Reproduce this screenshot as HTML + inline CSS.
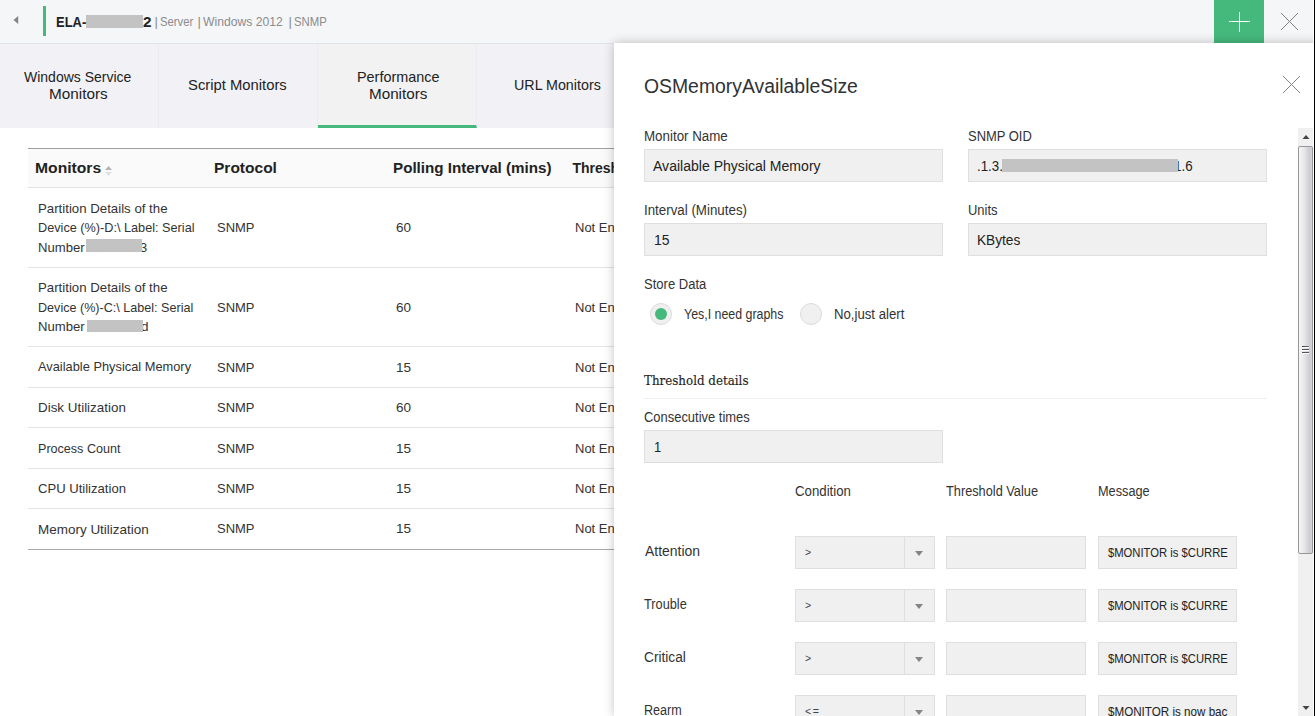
<!DOCTYPE html>
<html><head><meta charset="utf-8"><title>Performance Monitors</title>
<style>
*{box-sizing:border-box;margin:0;padding:0}
html,body{width:1315px;height:716px;overflow:hidden;background:#fff}
body{font-family:"Liberation Sans",sans-serif;color:#333;position:relative;font-size:14px}
.abs{position:absolute}
.t{position:absolute;white-space:nowrap;line-height:20px;transform-origin:0 0}
#hdr{left:0;top:0;width:1312.5px;height:43px;background:#f5f6f8}
#tabs{left:0;top:44px;width:1312.5px;height:84px;background:#f2f2f6}
.tab{position:absolute;top:0;height:84px;width:159px;border-right:1px solid #ebebf0}
.tab.on{background:#f2f2f2;border-bottom:3px solid #45b97c}
.hr{position:absolute;left:28px;height:1px;width:600px;background:#e4e4e4}
#panel{left:614px;top:43px;width:730px;height:673px;background:#fff;box-shadow:0 0 10px rgba(0,0,0,.24)}
.inp{position:absolute;height:33px;background:#f0f0f0;border:1px solid #dfdfdf}
.sel .arr{position:absolute;right:0;top:0;width:30px;height:31px;border-left:1px solid #dfdfdf}
.sel .arr:after{content:"";position:absolute;left:10px;top:13.5px;border:4px solid transparent;border-top:5px solid #858585;border-bottom:0}
.op{position:absolute;left:9px;top:4.5px;font-size:11.5px;line-height:20px;color:#444;transform:scaleX(.92);transform-origin:0 0}
.op.le{letter-spacing:1.6px}
.msg{position:absolute;left:8.5px;top:5.5px;width:120.5px;overflow:hidden;white-space:nowrap;font-size:13px;line-height:20px;color:#222}
.msg span{display:inline-block;transform-origin:0 0}
.rad{position:absolute;width:22px;height:22px;border-radius:50%;background:#f0f0f0;border:1px solid #dcdcdc}
.red{position:absolute;background:#c3c3c3}
</style></head><body>
<div id="hdr" class="abs"></div>
<div class="abs" style="left:0;top:43px;width:1312.5px;height:1px;background:#e2e3e6"></div>
<svg class="abs" style="left:12px;top:14px" width="10" height="12"><path d="M6.2 2 L1.5 6 L6.2 10 Z" fill="#83838c"/></svg>
<div class="abs" style="left:43px;top:6px;width:3px;height:30px;background:#45b97c"></div>
<div class="red" style="left:86.2px;top:15px;width:56.6px;height:12.7px"></div>
<div class="abs" style="left:1214px;top:0;width:50px;height:43px;background:#45b97c"></div>
<div class="abs" style="left:1239px;top:12px;width:1px;height:20px;background:#fff"></div><div class="abs" style="left:1229px;top:21px;width:21px;height:1px;background:#fff"></div>
<svg class="abs" style="left:1280px;top:12px" width="20" height="20"><path d="M1 1L18 18M18 1L1 18" stroke="#828282" stroke-width="1" fill="none"/></svg>
<div id="tabs" class="abs">
 <div class="tab" style="left:0"></div>
 <div class="tab" style="left:159px"></div>
 <div class="tab on" style="left:318px"></div>
 <div class="tab" style="left:477px"></div>
</div>
<div class="abs" style="left:28px;top:148px;width:600px;height:40px;background:#fafafa;border-top:1px solid #a0a0a0;border-bottom:1px solid #e2e2e2"></div>
<svg class="abs" style="left:104px;top:165px" width="9" height="12"><path d="M1 5L4.5 1L8 5Z" fill="#b5b5b5"/><path d="M1 7L4.5 11L8 7Z" fill="#e0e0e0"/></svg>

<div class="hr" style="top:267px"></div>
<div class="hr" style="top:346px"></div>
<div class="hr" style="top:387px"></div>
<div class="hr" style="top:427px"></div>
<div class="hr" style="top:468px"></div>
<div class="hr" style="top:508px"></div>
<div class="hr" style="top:549px;background:#a8a8a8"></div>
<div class="t" id="t0" style="left:56.13px;top:11.66px;font-size:15.4px;color:#222;font-weight:bold;transform:scaleX(0.8409);">ELA-</div>
<div class="t" id="t1" style="left:142.65px;top:11.66px;font-size:15.4px;color:#222;font-weight:bold;transform:scaleX(0.9933);">2</div>
<div class="t" id="t2" style="left:154.50px;top:12.00px;font-size:13px;color:#8c8c8c;">|</div>
<div class="t" id="t3" style="left:159.85px;top:12.00px;font-size:13px;color:#8c8c8c;transform:scaleX(0.8698);">Server</div>
<div class="t" id="t4" style="left:197.50px;top:12.00px;font-size:13px;color:#8c8c8c;">|</div>
<div class="t" id="t5" style="left:203.00px;top:12.00px;font-size:13px;color:#8c8c8c;transform:scaleX(0.9369);">Windows 2012</div>
<div class="t" id="t6" style="left:288.50px;top:12.00px;font-size:13px;color:#8c8c8c;">|</div>
<div class="t" id="t7" style="left:293.85px;top:12.00px;font-size:13px;color:#8c8c8c;transform:scaleX(0.8722);">SNMP</div>
<div class="t" id="t8" style="left:24.25px;top:66.98px;font-size:14.5px;color:#222;transform:scaleX(0.9652);">Windows Service</div>
<div class="t" id="t9" style="left:48.84px;top:84.23px;font-size:14.5px;color:#222;transform:scaleX(1.0546);">Monitors</div>
<div class="t" id="t10" style="left:188.48px;top:74.98px;font-size:14.5px;color:#222;transform:scaleX(1.0215);">Script Monitors</div>
<div class="t" id="t11" style="left:357.16px;top:66.98px;font-size:14.5px;color:#222;transform:scaleX(0.9932);">Performance</div>
<div class="t" id="t12" style="left:369.10px;top:84.23px;font-size:14.5px;color:#222;transform:scaleX(1.0500);">Monitors</div>
<div class="t" id="t13" style="left:514.17px;top:74.98px;font-size:14.5px;color:#222;transform:scaleX(0.9850);">URL Monitors</div>
<div class="t" id="t14" style="left:35.24px;top:158.15px;font-size:14px;color:#222;font-weight:bold;transform:scaleX(1.1200);">Monitors</div>
<div class="t" id="t15" style="left:214.31px;top:158.15px;font-size:14px;color:#222;font-weight:bold;transform:scaleX(1.1082);">Protocol</div>
<div class="t" id="t16" style="left:393.33px;top:158.15px;font-size:14px;color:#222;font-weight:bold;transform:scaleX(1.0843);">Polling Interval (mins)</div>
<div class="t" id="t17" style="left:572.50px;top:158.15px;font-size:14px;color:#222;font-weight:bold;">Threshold</div>
<div class="t" id="t18" style="left:38.48px;top:198.50px;font-size:13px;color:#333;transform:scaleX(1.0183);">Partition Details of the</div>
<div class="t" id="t19" style="left:37.93px;top:218.00px;font-size:13px;color:#333;transform:scaleX(0.9760);">Device (%)-D:\ Label: Serial</div>
<div class="t" id="t20" style="left:38.14px;top:237.75px;font-size:13px;color:#333;transform:scaleX(1.0089);">Number</div>
<div class="t" id="t21" style="left:139.65px;top:237.75px;font-size:13px;color:#333;transform:scaleX(0.9917);">3</div>
<div class="t" id="t22" style="left:38.48px;top:277.75px;font-size:13px;color:#333;transform:scaleX(1.0183);">Partition Details of the</div>
<div class="t" id="t23" style="left:37.93px;top:297.50px;font-size:13px;color:#333;transform:scaleX(0.9681);">Device (%)-C:\ Label: Serial</div>
<div class="t" id="t24" style="left:38.14px;top:317.00px;font-size:13px;color:#333;transform:scaleX(1.0089);">Number</div>
<div class="t" id="t25" style="left:141.11px;top:317.00px;font-size:13px;color:#333;transform:scaleX(1.0400);">d</div>
<div class="t" id="t26" style="left:216.75px;top:218.00px;font-size:13px;color:#333;transform:scaleX(0.9972);">SNMP</div>
<div class="t" id="t27" style="left:396.37px;top:218.00px;font-size:13px;color:#333;transform:scaleX(1.0400);">60</div>
<div class="t" id="t28" style="left:575.00px;top:218.00px;font-size:13px;color:#333;">Not Enabled</div>
<div class="t" id="t29" style="left:216.75px;top:297.50px;font-size:13px;color:#333;transform:scaleX(0.9972);">SNMP</div>
<div class="t" id="t30" style="left:396.37px;top:297.50px;font-size:13px;color:#333;transform:scaleX(1.0400);">60</div>
<div class="t" id="t31" style="left:575.00px;top:297.50px;font-size:13px;color:#333;">Not Enabled</div>
<div class="t" id="t32" style="left:216.75px;top:357.50px;font-size:13px;color:#333;transform:scaleX(0.9972);">SNMP</div>
<div class="t" id="t33" style="left:395.80px;top:357.50px;font-size:13px;color:#333;transform:scaleX(1.0400);">15</div>
<div class="t" id="t34" style="left:575.00px;top:357.50px;font-size:13px;color:#333;">Not Enabled</div>
<div class="t" id="t35" style="left:216.75px;top:397.50px;font-size:13px;color:#333;transform:scaleX(0.9972);">SNMP</div>
<div class="t" id="t36" style="left:396.37px;top:397.50px;font-size:13px;color:#333;transform:scaleX(1.0400);">60</div>
<div class="t" id="t37" style="left:575.00px;top:397.50px;font-size:13px;color:#333;">Not Enabled</div>
<div class="t" id="t38" style="left:216.75px;top:438.50px;font-size:13px;color:#333;transform:scaleX(0.9972);">SNMP</div>
<div class="t" id="t39" style="left:395.80px;top:438.50px;font-size:13px;color:#333;transform:scaleX(1.0400);">15</div>
<div class="t" id="t40" style="left:575.00px;top:438.50px;font-size:13px;color:#333;">Not Enabled</div>
<div class="t" id="t41" style="left:216.75px;top:478.50px;font-size:13px;color:#333;transform:scaleX(0.9972);">SNMP</div>
<div class="t" id="t42" style="left:395.80px;top:478.50px;font-size:13px;color:#333;transform:scaleX(1.0400);">15</div>
<div class="t" id="t43" style="left:575.00px;top:478.50px;font-size:13px;color:#333;">Not Enabled</div>
<div class="t" id="t44" style="left:216.75px;top:519.00px;font-size:13px;color:#333;transform:scaleX(0.9972);">SNMP</div>
<div class="t" id="t45" style="left:395.80px;top:519.00px;font-size:13px;color:#333;transform:scaleX(1.0400);">15</div>
<div class="t" id="t46" style="left:575.00px;top:519.00px;font-size:13px;color:#333;">Not Enabled</div>
<div class="t" id="t47" style="left:38.45px;top:357.10px;font-size:13px;color:#333;transform:scaleX(0.9868);">Available Physical Memory</div>
<div class="t" id="t48" style="left:37.91px;top:397.50px;font-size:13px;color:#333;transform:scaleX(1.0306);">Disk Utilization</div>
<div class="t" id="t49" style="left:37.94px;top:438.50px;font-size:13px;color:#333;transform:scaleX(0.9667);">Process Count</div>
<div class="t" id="t50" style="left:37.80px;top:478.50px;font-size:13px;color:#333;transform:scaleX(1.0058);">CPU Utilization</div>
<div class="t" id="t51" style="left:37.91px;top:519.50px;font-size:13px;color:#333;transform:scaleX(1.0362);">Memory Utilization</div>
<div class="red" style="left:86px;top:239px;width:56px;height:13px"></div>
<div class="red" style="left:87px;top:320px;width:56px;height:12px"></div>
<div class="abs" style="left:0;top:0;width:1312.5px;height:716px;overflow:hidden"><div id="panel" class="abs"></div></div>
<svg class="abs" style="left:1282px;top:75px" width="20" height="20"><path d="M1 1L18 18M18 1L1 18" stroke="#828282" stroke-width="1" fill="none"/></svg>
<div class="inp" style="left:644px;top:149px;width:299px"></div>
<div class="inp" style="left:644px;top:223px;width:299px"></div>
<div class="inp" style="left:968px;top:149px;width:299px"></div>
<div class="inp" style="left:968px;top:223px;width:299px"></div>
<div class="inp" style="left:644px;top:430px;width:299px"></div>
<div class="abs" style="left:644px;top:398px;width:623px;height:1px;background:#efefef"></div>
<div class="rad" style="left:650px;top:303px"></div><div class="abs" style="left:655px;top:308px;width:12px;height:12px;border-radius:50%;background:#45b97c"></div>
<div class="rad" style="left:800px;top:303px"></div>
<div class="inp sel" style="left:795px;top:536px;width:140px"><span class="op">&gt;</span><span class="arr"></span></div>
<div class="inp" style="left:946px;top:536px;width:140px"></div>
<div class="inp" style="left:1098px;top:536px;width:139px"><div class="msg"><span style="transform:scaleX(0.865)">$MONITOR is $CURRENTVALUE</span></div></div>
<div class="inp sel" style="left:795px;top:589px;width:140px"><span class="op">&gt;</span><span class="arr"></span></div>
<div class="inp" style="left:946px;top:589px;width:140px"></div>
<div class="inp" style="left:1098px;top:589px;width:139px"><div class="msg"><span style="transform:scaleX(0.865)">$MONITOR is $CURRENTVALUE</span></div></div>
<div class="inp sel" style="left:795px;top:642px;width:140px"><span class="op">&gt;</span><span class="arr"></span></div>
<div class="inp" style="left:946px;top:642px;width:140px"></div>
<div class="inp" style="left:1098px;top:642px;width:139px"><div class="msg"><span style="transform:scaleX(0.865)">$MONITOR is $CURRENTVALUE</span></div></div>
<div class="inp sel" style="left:795px;top:695px;width:140px"><span class="op le">&lt;=</span><span class="arr"></span></div>
<div class="inp" style="left:946px;top:695px;width:140px"></div>
<div class="inp" style="left:1098px;top:695px;width:139px"><div class="msg"><span style="transform:scaleX(0.895)">$MONITOR is now back to normal</span></div></div>
<div class="t" id="t52" style="left:643.51px;top:75.64px;font-size:19.5px;color:#303236;transform:scaleX(0.9934);">OSMemoryAvailableSize</div>
<div class="t" id="t53" style="left:644.20px;top:126.15px;font-size:14px;color:#333;transform:scaleX(0.9530);">Monitor Name</div>
<div class="t" id="t54" style="left:967.81px;top:126.15px;font-size:14px;color:#333;transform:scaleX(0.9244);">SNMP OID</div>
<div class="t" id="t55" style="left:653.45px;top:156.15px;font-size:14px;color:#222;transform:scaleX(1.0033);">Available Physical Memory</div>
<div class="t" id="t56" style="left:976.97px;top:156.15px;font-size:14px;color:#222;transform:scaleX(0.9475);">.1.3.</div>
<div class="t" id="t57" style="left:1173.70px;top:156.15px;font-size:14px;color:#222;transform:scaleX(0.9549);">1.6</div>
<div class="t" id="t58" style="left:643.96px;top:200.15px;font-size:14px;color:#333;transform:scaleX(0.9524);">Interval (Minutes)</div>
<div class="t" id="t59" style="left:967.88px;top:200.15px;font-size:14px;color:#333;transform:scaleX(0.9256);">Units</div>
<div class="t" id="t60" style="left:653.65px;top:229.90px;font-size:14px;color:#222;transform:scaleX(0.9964);">15</div>
<div class="t" id="t61" style="left:977.18px;top:229.90px;font-size:14px;color:#222;transform:scaleX(0.9754);">KBytes</div>
<div class="t" id="t62" style="left:643.80px;top:274.40px;font-size:14px;color:#333;transform:scaleX(0.9306);">Store Data</div>
<div class="t" id="t63" style="left:684.06px;top:303.90px;font-size:14px;color:#333;transform:scaleX(0.8848);">Yes,I need graphs</div>
<div class="t" id="t64" style="left:834.21px;top:303.90px;font-size:14px;color:#333;transform:scaleX(0.9415);">No,just alert</div>
<div class="t" id="t65" style="left:644.16px;top:370.32px;font-size:13.5px;color:#222;font-family:'DejaVu Serif','Liberation Serif',serif;-webkit-text-stroke:.15px #2a2a2a;transform:scaleX(0.8795);">Threshold details</div>
<div class="t" id="t66" style="left:643.81px;top:407.15px;font-size:14px;color:#333;transform:scaleX(0.9241);">Consecutive times</div>
<div class="t" id="t67" style="left:654.29px;top:437.15px;font-size:14px;color:#222;transform:scaleX(0.9200);">1</div>
<div class="t" id="t68" style="left:794.79px;top:481.40px;font-size:14px;color:#333;transform:scaleX(0.9461);">Condition</div>
<div class="t" id="t69" style="left:945.77px;top:481.15px;font-size:14px;color:#333;transform:scaleX(0.9115);">Threshold Value</div>
<div class="t" id="t70" style="left:1098.25px;top:481.15px;font-size:14px;color:#333;transform:scaleX(0.9082);">Message</div>
<div class="t" id="t71" style="left:644.70px;top:541.40px;font-size:14px;color:#333;transform:scaleX(0.9963);">Attention</div>
<div class="t" id="t72" style="left:644.27px;top:594.40px;font-size:14px;color:#333;transform:scaleX(0.9109);">Trouble</div>
<div class="t" id="t73" style="left:643.77px;top:647.40px;font-size:14px;color:#333;transform:scaleX(0.9794);">Critical</div>
<div class="t" id="t74" style="left:644.26px;top:700.40px;font-size:14px;color:#333;transform:scaleX(0.8987);">Rearm</div>
<div class="red" style="left:1002px;top:159px;width:176px;height:13px"></div>
<div class="abs" style="left:1298px;top:128px;width:14.5px;height:588px;background:#f0f0f0"></div>
<div class="abs" style="left:1298px;top:146px;width:14.5px;height:408px;border:1px solid #979797;border-radius:2px;background:linear-gradient(to right,#f6f6f6,#e4e4e6 45%,#cdcdd2 80%,#d4d4d8)"></div>
<svg class="abs" style="left:1298px;top:128px" width="15" height="18"><path d="M4.5 11L8 7L11.5 11Z" fill="#444"/></svg>
<svg class="abs" style="left:1298px;top:698px" width="15" height="18"><path d="M4.5 8L8 12L11.5 8Z" fill="#444"/></svg>
<div class="abs" style="left:1302px;top:346px;width:7px;height:1px;background:linear-gradient(to right,#333,#777);box-shadow:0 1px #fff,0 3px #555,0 4px #fff,0 6px #555,0 7px #fff"></div>
<div class="abs" style="left:1313.6px;top:0;width:1.4px;height:716px;background:#000"></div>
</body></html>
